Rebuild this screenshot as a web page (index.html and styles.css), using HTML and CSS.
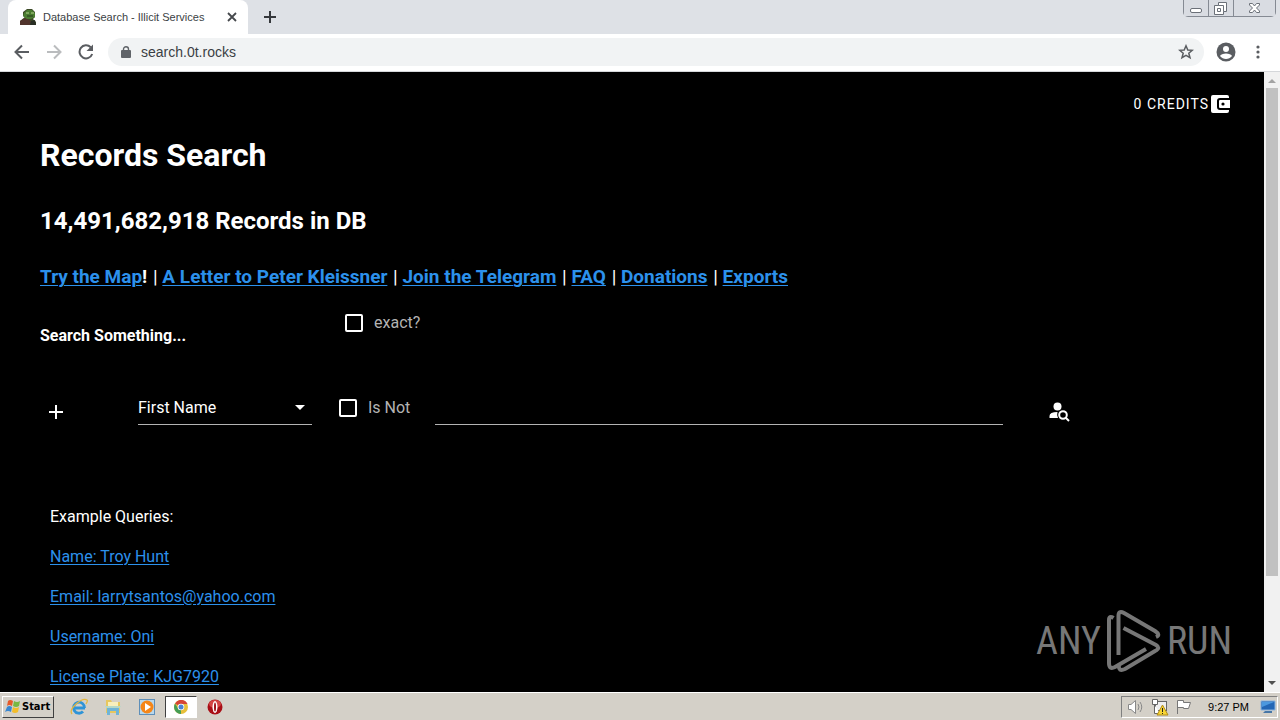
FILE: index.html
```html
<!DOCTYPE html>
<html lang="en">
<head>
<meta charset="utf-8">
<title>Database Search - Illicit Services</title>
<link rel="stylesheet" href="styles.css">
</head>
<body>
<header class="browser">
  <div class="tabstrip">
    <div class="tab">
      <svg class="favicon" width="16" height="16" viewBox="0 0 16 16"><path d="M0 16V12L5 8L3 7V3L7 0H12L15 3V8L13 10L16 13V16Z" fill="#3c4a26"/><path d="M4 4L7 1H12L15 4V8L11 10H6L3 7Z" fill="#4a7c30"/><path d="M0 16V12L5 9L11 12L10 16Z" fill="#51342c"/><path d="M6 4H9M11 4H14" stroke="#b3d38b"/><path d="M7 7H13" stroke="#273b1d"/><path d="M11 12L15 11L16 16H10Z" fill="#292e24"/></svg>
      <span class="tab-title">Database Search - Illicit Services</span>
      <button class="plain" aria-label="Close tab"><svg width="10" height="10" viewBox="0 0 10 10"><path d="M1 1L9 9M9 1L1 9" stroke="#45484c" stroke-width="1.8"/></svg></button>
    </div>
    <button class="plain new-tab" aria-label="New tab"><svg width="12" height="12" viewBox="0 0 12 12"><path d="M6 0V12M0 6H12" stroke="#35383c" stroke-width="2"/></svg></button>
    <div class="window-controls">
      <button aria-label="Minimize"><svg width="24" height="16" viewBox="0 0 24 16"><rect x="6.500" y="8.500" width="11" height="4" rx="1.500" fill="#fff" stroke="#6b7078"/></svg></button>
      <button aria-label="Restore"><svg width="24" height="16" viewBox="0 0 24 16"><path d="M9.500 2.500H17.500V11.500H14.500V14.500H5.500V5.500H9.500Z" fill="#fff" stroke="#6b7078"/><path d="M9.500 5.500H14.500V11.500M8.500 8.500H11.500V11.500H8.500Z" fill="none" stroke="#6b7078"/></svg></button>
      <button aria-label="Close"><svg width="41" height="16" viewBox="0 0 41 16"><path d="M15.500 3.500H18.500L20.500 6L22.500 3.500H25.500V5L22.500 8L25.500 11V12.500H22.500L20.500 10L18.500 12.500H15.500V11L18.500 8L15.500 5Z" fill="#fff" stroke="#6b7078"/></svg></button>
    </div>
  </div>
  <div class="toolbar">
    <button class="plain" aria-label="Back"><svg width="16" height="16" viewBox="0 0 16 16"><path d="M15 8H2M8 1.500L1.500 8L8 14.500" fill="none" stroke="#5a5d61" stroke-width="2"/></svg></button>
    <button class="plain" aria-label="Forward"><svg width="16" height="16" viewBox="0 0 16 16"><path d="M1 8H14M8 1.500L14.500 8L8 14.500" fill="none" stroke="#babcbe" stroke-width="2"/></svg></button>
    <button class="plain" aria-label="Reload"><svg width="16" height="16" viewBox="0 0 16 16"><path d="M12.700 3.300A6.500 6.500 0 1 0 14.200 10" fill="none" stroke="#5a5d61" stroke-width="2"/><path d="M15 0.500V7H8.500Z" fill="#5a5d61"/></svg></button>
    <div class="omnibox">
      <svg width="10" height="13" viewBox="0 0 10 13"><rect y="4" width="10" height="8" rx="1" fill="#5f6368"/><path d="M2.500 5V3.200A2.500 2.500 0 0 1 7.500 3.200V5" fill="none" stroke="#5f6368" stroke-width="1.400"/></svg>
      <input class="address" aria-label="Address" value="search.0t.rocks">
      <button class="plain" aria-label="Bookmark"><svg width="16" height="16" viewBox="0 0 16 16"><path d="M8 1.800L9.800 6L14.300 6.300L10.800 9.200L12 13.700L8 11.300L4 13.700L5.200 9.200L1.700 6.300L6.200 6Z" fill="none" stroke="#5a5d61" stroke-width="1.500"/></svg></button>
    </div>
    <button class="plain" aria-label="Profile"><svg width="20" height="20" viewBox="0 0 20 20"><circle cx="10" cy="10" r="9.500" fill="#5a5d61"/><circle cx="10" cy="7" r="3" fill="#fff"/><path d="M4 14C5 10.500 15 10.500 16 14C13 18 7 18 4 14Z" fill="#fff"/></svg></button>
    <button class="plain menu" aria-label="Menu"><svg width="4" height="14" viewBox="0 0 4 14"><g fill="#5a5d61"><circle cx="2" cy="2" r="1.600"/><circle cx="2" cy="7" r="1.600"/><circle cx="2" cy="12" r="1.600"/></g></svg></button>
  </div>
</header>

<div class="viewport">
  <main class="page">
    <div class="credits-row"><button class="plain credits">0 CREDITS<svg width="20" height="18" viewBox="0 0 20 18"><path d="M2 0H16Q18 0 18 2V3H9Q6 3 6 6V12Q6 15 9 15H18V16Q18 18 16 18H2Q0 18 0 16V2Q0 0 2 0Z" fill="#fff"/><path d="M9 5H19V13H9Q8 13 8 12V6Q8 5 9 5Z" fill="#fff"/><circle cx="12" cy="9" r="1.600"/></svg></button></div>
    <h1>Records Search</h1>
    <h2>14,491,682,918 Records in DB</h2>
    <h3 class="links"><a href="#">Try the Map</a>! <span>|</span> <a href="#">A Letter to Peter Kleissner</a> <span>|</span> <a href="#">Join the Telegram</a> <span>|</span> <a href="#">FAQ</a> <span>|</span> <a href="#">Donations</a> <span>|</span> <a href="#">Exports</a></h3>
    <div class="search-head">
      <h4>Search Something...</h4>
      <label class="check"><input type="checkbox">exact?</label>
    </div>
    <form class="query">
      <button type="button" class="plain add" aria-label="Add"><svg width="14" height="14" viewBox="0 0 14 14"><path d="M7 0V14M0 7H14" stroke="#fff" stroke-width="2"/></svg></button>
      <div class="select-box">
        <select aria-label="Field"><option>First Name</option></select>
        <svg width="10" height="5" viewBox="0 0 10 5"><path d="M0 0H10L5 5Z" fill="#fff"/></svg>
      </div>
      <label class="check"><input type="checkbox">Is Not</label>
      <input class="term" type="text" aria-label="Search value">
      <button type="button" class="plain find" aria-label="Search"><svg width="21" height="20" viewBox="0 0 21 20"><circle cx="8.500" cy="4.500" r="4" fill="#fff"/><path d="M0.500 16V14Q0.500 10 8.500 10Q7.500 13 9 16Z" fill="#fff"/><circle cx="14" cy="13" r="3.800" fill="none" stroke="#fff" stroke-width="2"/><path d="M16.500 15.500L20 19" stroke="#fff" stroke-width="2"/></svg></button>
    </form>
    <section class="examples">
      <p>Example Queries:</p>
      <p><a href="#">Name: Troy Hunt</a></p>
      <p><a href="#">Email: larrytsantos@yahoo.com</a></p>
      <p><a href="#">Username: Oni</a></p>
      <p><a href="#">License Plate: KJG7920</a></p>
    </section>
  </main>
  <div class="scrollbar">
    <svg width="8" height="4" viewBox="0 0 8 4"><path d="M0 4L4 0L8 4Z" fill="#a3a3a3"/></svg>
    <div class="track"><div class="thumb"></div></div>
    <svg width="8" height="4" viewBox="0 0 8 4"><path d="M0 0L4 4L8 0Z" fill="#505050"/></svg>
  </div>
  <div class="watermark">
    <span>ANY</span>
    <svg width="54" height="62" viewBox="0 0 54 62"><g fill="none" stroke="#777" stroke-width="4"><path d="M6.500 8Q2 5 2 10V53Q2 60 8 57L39 39"/><path d="M11.500 45V6Q11.500 0 17 3L48 21Q54 25 49 27"/><path d="M16.500 18L49 35Q54 38 48 41L18 59Q11 62 12 55"/></g></svg>
    <span>RUN</span>
  </div>
</div>

<footer class="taskbar">
  <button class="start"><svg width="16" height="15" viewBox="0 0 16 15"><path d="M3 2Q5 0 8 2L7 7Q4 5 2 7Z" fill="#e65a2a"/><path d="M9 2Q12 4 15 2L14 7Q11 9 8 7Z" fill="#78b843"/><path d="M2 8Q4 6 7 8L6 13Q3 11 0 13Z" fill="#3987d1"/><path d="M8 8Q11 10 14 8L13 13Q10 15 7 13Z" fill="#f3bd2b"/></svg>Start</button>
  <nav class="launch">
    <button class="plain" aria-label="Internet Explorer"><svg width="18" height="18" viewBox="0 0 18 18"><path d="M15 10H5M14.500 10A5.500 5.500 0 1 0 13 13.500" fill="none" stroke="#2f94d7" stroke-width="2.800"/><path d="M2 16C-2 11 12-1 17 2Q18 3 16 6" fill="none" stroke="#e4b73e" stroke-width="1.300"/></svg></button>
    <button class="plain" aria-label="Explorer"><svg width="18" height="18" viewBox="0 0 18 18"><path d="M2 2H7L8 4H16V15H2Z" fill="#e7c75e"/><path d="M4 4H14V8H4Z" fill="#f8efbc"/><path d="M1 8H17L15 11H3Z" fill="#b5d8c7"/><path d="M3 10H15V17H12V13H6V17H3Z" fill="#6fb4d7"/></svg></button>
    <button class="plain" aria-label="Media Player"><svg width="18" height="18" viewBox="0 0 18 18"><rect x="1.500" y="1.500" width="15" height="15" fill="#b8d8ed" stroke="#5e8fb9"/><circle cx="9" cy="9" r="6.500" fill="#f58618"/><path d="M7 5L13 9L7 13Z" fill="#fff"/></svg></button>
    <button class="plain active" aria-label="Chrome"><svg width="14" height="14" viewBox="0 0 14 14"><circle cx="7" cy="7" r="7" fill="#e7bf3a"/><path d="M1 3.500A7 7 0 0 1 13.500 4H7V7Z" fill="#d64536"/><path d="M1 3.500L5 10L7 10L7 14A7 7 0 0 1 1 3.500Z" fill="#459d55"/><circle cx="7" cy="7" r="3.300" fill="#fff"/><circle cx="7" cy="7" r="2.500" fill="#4b83d3"/></svg></button>
    <button class="plain" aria-label="Opera"><svg width="16" height="16" viewBox="0 0 16 16"><circle cx="8" cy="8" r="7.500" fill="#a90e16"/><ellipse cx="8" cy="5" rx="6" ry="4" fill="#d44444"/><ellipse cx="8" cy="8" rx="2.500" ry="6" fill="#fff"/><ellipse cx="8" cy="8" rx="1" ry="4.500" fill="#9e1018"/></svg></button>
  </nav>
  <div class="tray">
    <svg width="18" height="16" viewBox="0 0 18 16"><path d="M1.500 5.500H4L8.500 1.500V14.500L4 10.500H1.500Z" fill="#fff" stroke="#888"/><path d="M11 5Q13 8 11 11M13 3Q16.500 8 13 13" fill="none" stroke="#888"/></svg>
    <svg width="18" height="18" viewBox="0 0 18 18"><rect x="4.500" y="3.500" width="11" height="9" fill="#eee" stroke="#666"/><path d="M1.500 1.500H6.500V6.500H1.500ZM3.500 7V15.500H9" fill="#fff" stroke="#666"/><path d="M11.500 7L17 17H6Z" fill="#f8d533" stroke="#b18b16"/><path d="M11.500 10V14M11.500 15V16" stroke="#222"/></svg>
    <svg width="18" height="16" viewBox="0 0 18 16"><path d="M2.500 15V1.500H8.500V3.500H15.500L13.500 9.500H8.500V8.500H3" fill="#fff" stroke="#777"/></svg>
    <time>9:27 PM</time>
    <svg width="16" height="14" viewBox="0 0 16 14"><path d="M1 1H15V10H1Z" fill="#2366b5" stroke="#89b3df"/><path d="M2 2H14L2 7Z" fill="#4b98df"/><path d="M5 11H12V13H3Z" fill="#4776a6"/></svg>
  </div>
</footer>
</body>
</html>
```

FILE: styles.css
```css
* { box-sizing: border-box; }
body { margin: 0; height: 100vh; display: flex; flex-direction: column; overflow: hidden; background: #000; font-family: Roboto, sans-serif; font-size: 16px; color: #fff; }
svg { display: block; flex: none; }
.plain { border: 0; padding: 0; background: none; display: flex; align-items: center; justify-content: center; color: inherit; font: inherit; flex: none; }
h1, h2, h3, h4, p { margin: 0; }
a { color: #2c91ec; text-decoration: underline; text-underline-offset: 2px; text-decoration-thickness: 1px; }

.browser { flex: none; font-family: "Liberation Sans", sans-serif; color: #3b3f44; }
.tabstrip { height: 34px; background: #dee1e6; display: flex; align-items: center; padding-left: 8px; }
.tab { width: 240px; height: 34px; display: flex; align-items: center; gap: 7px; padding: 0 11px 0 12px; border-radius: 8px 8px 0 0; background: #fff; font-size: 11px; }
.tab-title { flex: 1; white-space: nowrap; }
.new-tab { margin-left: 16px; }
.window-controls { align-self: flex-start; display: flex; margin-left: auto; margin-right: 4px; border: 1px solid #858a93; border-top: 0; border-radius: 0 0 5px 5px; }
.window-controls button { padding: 0; border: 0; background: #d9dce2; }
.window-controls button + button { border-left: 1px solid #858a93; }
.toolbar { height: 38px; display: flex; align-items: center; gap: 16px; padding: 0 20px 1px 14px; background: #fff; border-bottom: 1px solid #d5d7da; }
.omnibox { flex: 1; height: 28px; border-radius: 14px; background: #f1f3f4; display: flex; align-items: center; gap: 10px; padding: 0 10px 0 13px; margin: 0 -4px 0 -2px; }
.address { flex: 1; min-width: 0; border: 0; padding: 0; background: none; font-family: inherit; font-size: 14px; color: #3b3f44; }
.menu { margin-left: 4px; }

.viewport { position: relative; flex: 1; min-height: 0; display: flex; }
.page { flex: 1; min-width: 0; overflow: hidden; padding: 20px 33px 0 40px; }
.credits-row { display: flex; justify-content: flex-end; }
.credits { height: 24px; gap: 2px; font-size: 14px; letter-spacing: 1px; }
h1 { margin-top: 18px; font-size: 32px; line-height: 42px; }
h2 { margin-top: 28px; font-size: 24px; line-height: 34px; }
.links { margin-top: 26px; font-size: 19px; line-height: 26px; }
.links span { margin-left: 1px; font-weight: 400; }
.search-head { margin-top: 21px; display: flex; align-items: flex-start; }
.search-head h4 { width: 305px; padding-top: 13px; font-size: 16px; line-height: 24px; }
.check { display: flex; align-items: center; gap: 11px; line-height: 24px; color: #b3b3b3; }
.check input { appearance: none; width: 18px; height: 18px; margin: 0; border: 2px solid #fff; border-radius: 2px; }
.query { margin-top: 42px; display: flex; align-items: flex-start; }
.query .check { margin: 6px 25px 0 27px; }
.add { width: 32px; height: 44px; }
.select-box { width: 174px; height: 35px; margin-left: 66px; display: flex; align-items: center; padding-right: 7px; border-bottom: 1px solid #b3b3b3; }
select { flex: 1; min-width: 0; appearance: none; padding: 0; border: 0; background: none; color: #fff; font: inherit; }
.term { flex: 1; min-width: 0; height: 35px; padding: 0; border: 0; border-bottom: 1px solid #b3b3b3; background: none; color: #fff; font: inherit; }
.find { height: 44px; margin: 0 161px 0 46px; }
.examples { margin-top: 71px; padding-left: 10px; display: grid; gap: 16px; line-height: 24px; }
.scrollbar { width: 16px; padding: 7px 0; display: flex; flex-direction: column; align-items: center; gap: 5px; background: #f1f1f1; }
.track { flex: 1; width: 12px; }
.thumb { height: 83%; background: #c1c1c1; }
.watermark { position: absolute; right: 48px; bottom: 20px; display: flex; align-items: center; gap: 6px; font-family: "Liberation Sans Narrow", "Roboto Condensed", Roboto, sans-serif; font-size: 38px; line-height: 62px; color: #777; }

.taskbar { flex: none; height: 28px; display: flex; align-items: center; padding: 0 2px; background: #d4d0c8; border-top: 1px solid #fff; color: #000; font-family: "Liberation Sans", sans-serif; font-size: 11px; }
.start { width: 52px; height: 22px; padding: 0 2px; display: flex; align-items: center; gap: 1px; border: 1px solid; border-color: #fff #404040 #404040 #fff; background: #d4d0c8; color: #000; font: bold 11px "DejaVu Sans Condensed", "Noto Sans", sans-serif; }
.launch { display: flex; align-items: center; margin-left: 8px; }
.launch button { width: 34px; height: 22px; }
.launch .active { width: 32px; margin: 0 1px; background: #fff; border: 1px solid; border-color: #404040 #fff #fff #404040; }
.tray { margin-left: auto; height: 22px; display: flex; align-items: center; gap: 6px; padding: 0 1px 0 5px; border: 1px solid; border-color: #808080 #fff #fff #808080; }
.tray time { margin: 0 5px 0 9px; }
```
